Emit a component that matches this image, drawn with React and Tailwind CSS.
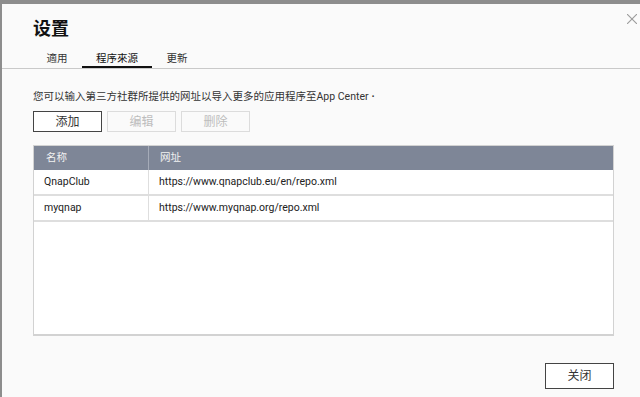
import React from "react"

const rows = [
  { name: "QnapClub", url: "https://www.qnapclub.eu/en/repo.xml" },
  { name: "myqnap", url: "https://www.myqnap.org/repo.xml" },
]

const tabs = [
  { label: "適用", w: "w-[50px]" },
  { label: "程序來源", w: "w-[70px]", active: true },
  { label: "更新", w: "w-[50px]" },
]

export default function App() {
  return (
    <div className="w-[640px] h-[397px] overflow-hidden bg-[#8d8d8d] pt-[4px] pl-[2px]">
      <div className="relative h-full bg-[#fafafa] font-['Roboto','Noto_Sans_CJK_SC',sans-serif] text-[#333]">
        <h1 className="pt-[13px] pl-[31px] text-[18px] leading-[24px] font-bold text-[#111]">设置</h1>
        <button className="absolute right-[3px] top-[10px] w-[10px] h-[10px]">
          <svg viewBox="0 0 10 10" className="w-[10px] h-[10px]" fill="none" stroke="#9a9a9a" strokeWidth="1.1">
            <line x1="0" y1="0" x2="10" y2="10" />
            <line x1="10" y1="0" x2="0" y2="10" />
          </svg>
        </button>

        {/* tabs */}
        <div className="mt-[11px] flex pl-[30px] border-b border-[#c9c9c9]">
          {tabs.map((t) => (
            <div
              key={t.label}
              className={`${t.w} text-center text-[10.5px] leading-[14px] border-b-2 ${
                t.active ? "border-[#111] text-[#111]" : "border-transparent text-[#333]"
              }`}
            >
              {t.label}
            </div>
          ))}
        </div>

        <div className="pl-[31px] pr-[26px]">
          <p className="mt-[21px] text-[10.5px] leading-[14px] text-[#333]">
            您可以输入第三方社群所提供的网址以导入更多的应用程序至App Center
            <span className="ml-[3px] font-bold">·</span>
          </p>

          <div className="mt-[7px] flex gap-[5px]">
            <button className="w-[69px] h-[21px] bg-white border border-[#444] text-[12px] leading-none text-[#333]">
              添加
            </button>
            <button className="w-[69px] h-[21px] bg-[#fafafa] border border-[#dcdcdc] text-[12px] leading-none text-[#bdbdbd]">
              编辑
            </button>
            <button className="w-[69px] h-[21px] bg-[#fafafa] border border-[#dcdcdc] text-[12px] leading-none text-[#bdbdbd]">
              删除
            </button>
          </div>

          {/* table */}
          <div className="mt-[13px] h-[191px] bg-white border border-[#d2d2d2] border-b-2 flex flex-col">
            <div className="flex h-[24px] bg-[#7e8697] text-[#f2f2f2] text-[10.5px] items-center">
              <div className="w-[115px] h-full flex items-center pl-[12px] border-r border-[#a5abb8]">名称</div>
              <div className="flex-1 pl-[11px]">网址</div>
            </div>
            {rows.map((r) => (
              <div key={r.name} className="flex h-[26px] border-b-2 border-[#dedede] text-[10.5px] text-[#222]">
                <div className="w-[115px] h-full flex items-center pl-[10px] border-r border-[#dedede]">{r.name}</div>
                <div className="flex-1 flex items-center pl-[10px]">{r.url}</div>
              </div>
            ))}
          </div>

          <div className="mt-[27px] flex justify-end">
            <button className="w-[69px] h-[26px] bg-white border border-[#444] text-[12px] leading-none text-[#333]">
              关闭
            </button>
          </div>
        </div>
      </div>
    </div>
  )
}
